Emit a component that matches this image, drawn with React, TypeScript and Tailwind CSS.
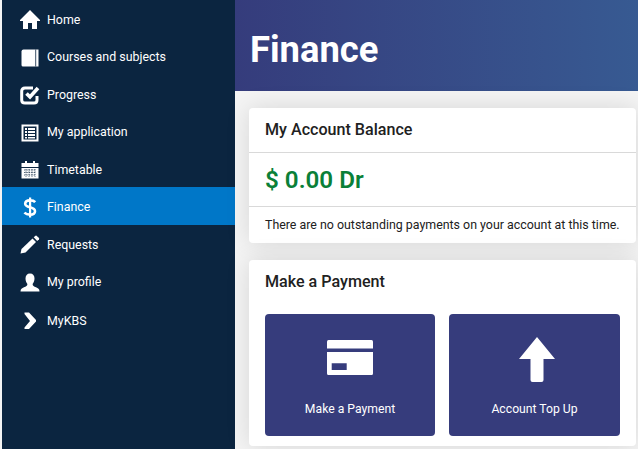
const navItems = [
  { label: 'Home', icon: <HomeIcon /> },
  { label: 'Courses and subjects', icon: <BookIcon /> },
  { label: 'Progress', icon: <CheckIcon /> },
  { label: 'My application', icon: <ListIcon /> },
  { label: 'Timetable', icon: <CalendarIcon /> },
  { label: 'Finance', icon: <DollarIcon />, active: true },
  { label: 'Requests', icon: <PencilIcon /> },
  { label: 'My profile', icon: <UserIcon /> },
  { label: 'MyKBS', icon: <ChevronIcon />, last: true },
];

function HomeIcon() {
  return (
    <svg width="20" height="20" viewBox="0 0 20 20" fill="white">
      <path d="M10 0 L20 10 L20 11 L17 11 L17 19 L12 19 L12 13 L8 13 L8 19 L3 19 L3 11 L0 11 L0 10 Z" />
    </svg>
  );
}

function BookIcon() {
  return (
    <svg width="20" height="20" viewBox="0 0 20 20" fill="white">
      <path d="M3.5 1.5 L18.5 1.5 L18.5 18.5 L3 18.5 Q1.5 18.5 1.5 17 L1.5 3.5 Q1.5 1.5 3.5 1.5 Z" />
      <path d="M15.7 1.5 L15.7 18.5" stroke="#0b2540" strokeWidth="0.8" />
    </svg>
  );
}

function CheckIcon() {
  return (
    <svg width="20" height="20" viewBox="0 0 20 20" fill="none">
      <path d="M13 3 L5 3 Q1.7 3 1.7 6 L1.7 15 Q1.7 18 5 18 L14 18 Q17 18 17 15 L17 11" stroke="white" strokeWidth="3" />
      <path d="M6.5 8.5 L10 12 L18 3" stroke="white" strokeWidth="3.6" />
    </svg>
  );
}

function ListIcon() {
  return (
    <svg width="20" height="20" viewBox="0 0 20 20" fill="white">
      <path fillRule="evenodd" d="M1.5 1.5 H18.5 V18.5 H1.5 Z M3.5 3.5 V16.5 H16.5 V3.5 Z" />
      <path d="M5 5 H7 V7 H5 Z M8 5 H15 V7 H8 Z M5 8 H7 V10 H5 Z M8 8 H15 V10 H8 Z M5 11 H7 V13 H5 Z M8 11 H15 V13 H8 Z M5 14 H7 V15.5 H5 Z M8 14 H15 V15.5 H8 Z" />
    </svg>
  );
}

function CalendarIcon() {
  return (
    <svg width="20" height="20" viewBox="0 0 20 20" fill="white">
      <path d="M1.5 3 H5 V1 H7 V3 H13 V1 H15 V3 H18.5 V7 H1.5 Z" />
      <path fillRule="evenodd" d="M1.5 8 H18.5 V18.5 H1.5 Z" />
      <path d="M4 10 H16 M4 12.5 H16 M4 15 H16 M6 9 V17 M9 9 V17 M12 9 V17 M15 9 V17" stroke="#0b2540" strokeWidth="0.7" strokeDasharray="1.4 1" />
    </svg>
  );
}

function DollarIcon() {
  return (
    <svg width="14" height="21" viewBox="0 0 14 21" fill="none">
      <path d="M6 0.5 H8.2 V20.5 H6 Z" fill="white" />
      <path d="M12.2 5.2 C11 3.8 9 3.4 7 3.4 C4 3.4 2.2 4.8 2.2 6.8 C2.2 11.5 12 9.2 12 14.2 C12 16.4 9.8 17.6 7 17.6 C4.8 17.6 2.8 17 1.4 15.6" stroke="white" strokeWidth="2.6" />
    </svg>
  );
}

function PencilIcon() {
  return (
    <svg width="20" height="20" viewBox="0 0 20 20" fill="white">
      <path d="M0.5 18.5 L1.5 14 L12.5 3.5 L16 7 L5.5 17.5 Z" />
      <path d="M13.7 2.3 L15.5 0.8 Q16.2 0.4 16.8 0.9 L19 3 Q19.4 3.6 19 4.2 L17.2 6 Z" />
    </svg>
  );
}

function UserIcon() {
  return (
    <svg width="20" height="20" viewBox="0 0 20 20" fill="white">
      <path d="M10 0.5 C13 0.5 14.5 2.5 14.5 5.5 C14.5 8 13.5 10 12.6 11 C12.6 13 14 13.5 16 14.2 C18 15 19.5 15.8 19.5 18.5 L0.5 18.5 C0.5 15.8 2 15 4 14.2 C6 13.5 7.4 13 7.4 11 C6.5 10 5.5 8 5.5 5.5 C5.5 2.5 7 0.5 10 0.5 Z" />
    </svg>
  );
}

function ChevronIcon() {
  return (
    <svg width="20" height="20" viewBox="0 0 20 20" fill="white">
      <path d="M4.5 1.5 L9 1.5 L16 9 L16 10.5 L9 18 L4.5 18 L4.5 16.5 L10 10 L4.5 3 Z" />
    </svg>
  );
}

function CardIcon() {
  return (
    <svg width="46" height="35" viewBox="0 0 46 35" fill="white">
      <path d="M1.5 0 H44.5 Q46 0 46 1.5 V8.5 H0 V1.5 Q0 0 1.5 0 Z" />
      <path fillRule="evenodd" d="M0 12 H46 V33.5 Q46 35 44.5 35 H1.5 Q0 35 0 33.5 Z M4.7 23.3 V30 H19.7 V23.3 Z" />
    </svg>
  );
}

function ArrowIcon() {
  return (
    <svg width="36" height="45" viewBox="0 0 36 45" fill="white">
      <path d="M18 0 L36 22 L24.5 22 L24.5 43 Q24.5 45 22.5 45 L13.5 45 Q11.5 45 11.5 43 L11.5 22 L0 22 Z" />
    </svg>
  );
}

export default function App() {
  return (
    <div className="flex h-[449px] w-[638px] overflow-hidden bg-[#f4f4f4] font-['Roboto',sans-serif]">
      <nav className="ml-[2px] flex w-[233px] shrink-0 flex-col bg-[#0b2540]">
        {navItems.map((item) => (
          <div
            key={item.label}
            className={`flex items-center pt-[3px] text-[12.4px] text-white ${item.active ? '-mt-[0.5px] h-[38px] bg-[#0077c8]' : 'h-[37.5px]'} ${item.last ? 'mt-[1px]' : ''}`}
          >
            <span className="ml-[18px] flex w-[20px] shrink-0 justify-center">{item.icon}</span>
            <span className="ml-[7px]">{item.label}</span>
          </div>
        ))}
      </nav>
      <main className="flex flex-1 flex-col">
        <header className="flex h-[91px] shrink-0 items-center bg-gradient-to-r from-[#353c7c] to-[#375a92] pl-[15px] pt-[10px]">
          <h1 className="text-[36.4px] font-bold text-white">Finance</h1>
        </header>
        <div className="flex flex-col gap-[17px] pl-[14px] pr-[3px] pt-[17px]">
          <section className="rounded-[4px] bg-white shadow-[0_0_24px_rgba(0,0,0,0.12)]">
            <h2 className="flex h-[45px] items-center border-b border-[#d9d9d9] pl-[16px] text-[16.1px] font-medium text-[#212121]">
              My Account Balance
            </h2>
            <p className="flex h-[54px] items-center border-b border-[#d9d9d9] pl-[16px] pt-[1px] text-[24.2px] font-semibold text-[#0a8038]">
              $ 0.00 Dr
            </p>
            <p className="flex h-[36px] items-center whitespace-nowrap pl-[16px] text-[12.4px] text-[#212121]">
              There are no outstanding payments on your account at this time.
            </p>
          </section>
          <section className="h-[186px] rounded-[4px] bg-white px-[16px] shadow-[0_0_24px_rgba(0,0,0,0.12)]">
            <h2 className="flex h-[43px] items-center pt-[2px] text-[16.1px] font-medium text-[#212121]">Make a Payment</h2>
            <div className="mt-[11px] flex gap-[14px]">
              <div className="flex h-[122px] w-[170px] flex-col items-center rounded-[4px] bg-[#363c7c] pt-[26px] text-[12.2px] text-white">
                <CardIcon />
                <span className="mt-[25px] h-[18px] leading-[18px]">Make a Payment</span>
              </div>
              <div className="flex h-[122px] w-[171px] flex-col items-center rounded-[4px] bg-[#363c7c] pt-[23px] text-[12.2px] text-white">
                <span className="ml-[5px] flex">
                  <ArrowIcon />
                </span>
                <span className="mt-[18px] h-[18px] leading-[18px]">Account Top Up</span>
              </div>
            </div>
          </section>
        </div>
      </main>
    </div>
  );
}
